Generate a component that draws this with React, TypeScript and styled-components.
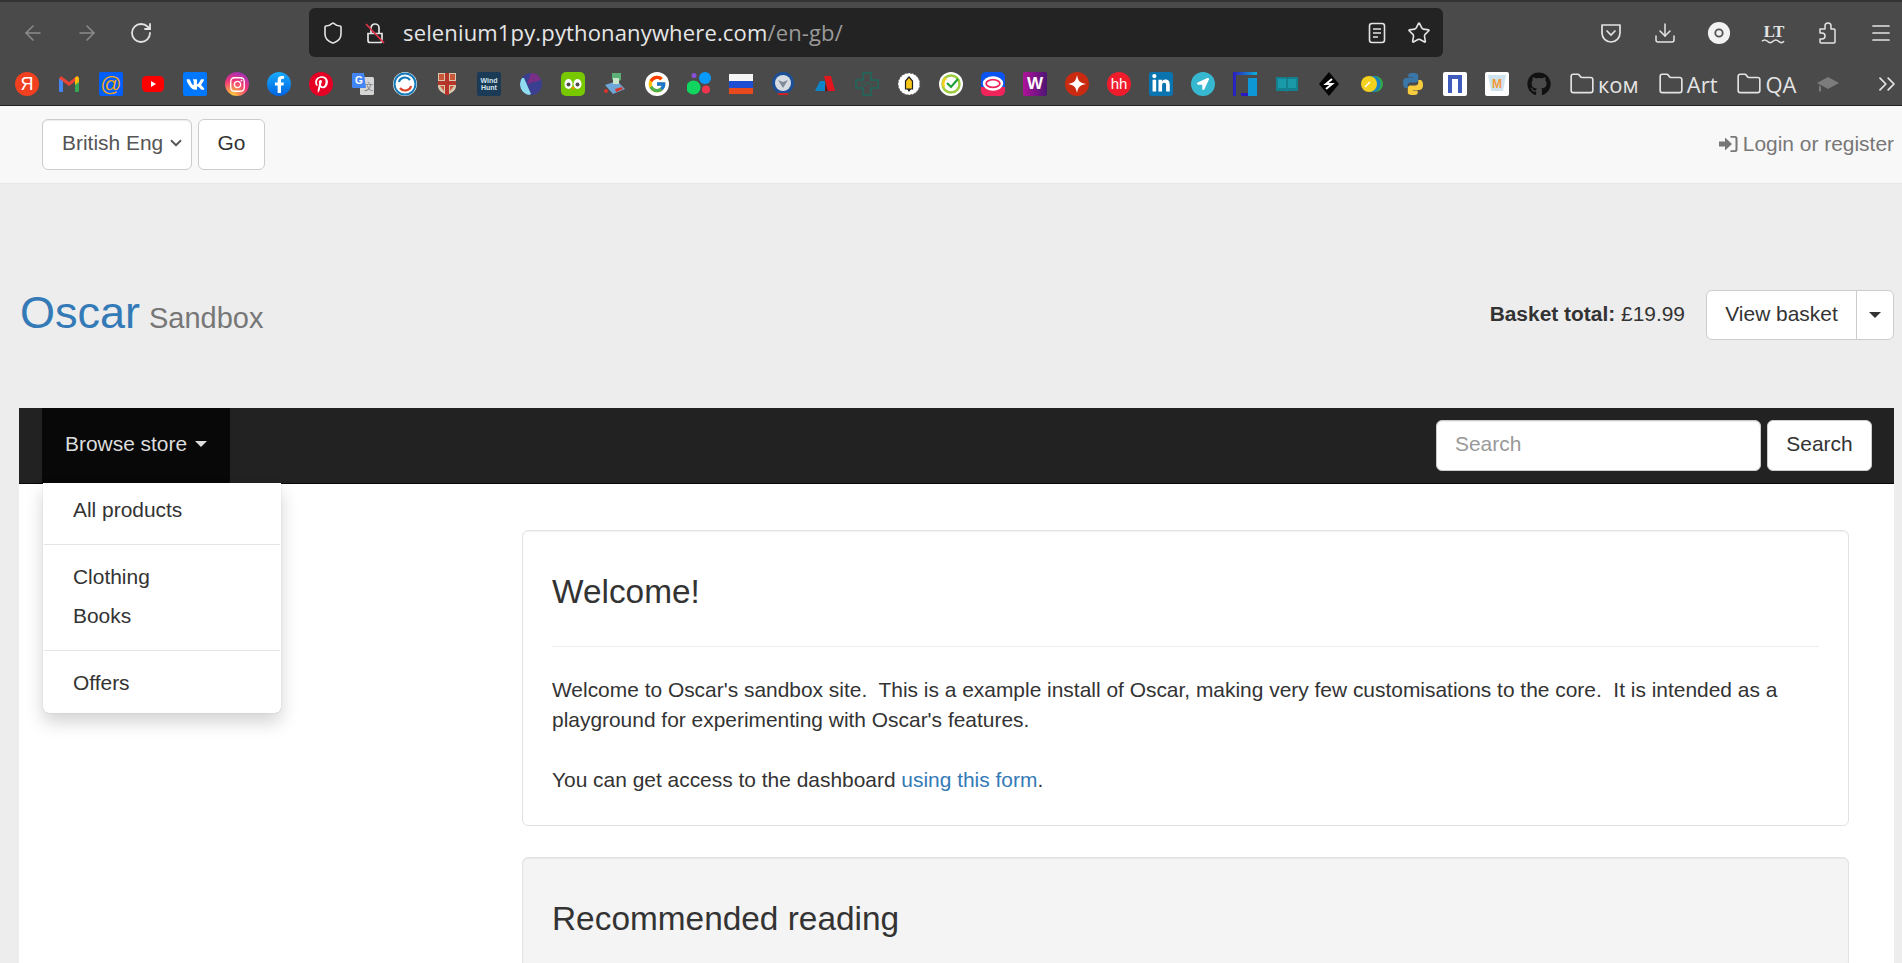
import React from "react";
import styled, { createGlobalStyle } from "styled-components";
import { ArrowLeft, ArrowRight, ChevronDown, ChevronsRight, Download, Folder, Menu, RotateCw, Shield, Star } from "lucide-react";
import { FaFacebookF, FaGithub, FaInstagram, FaLinkedinIn, FaLocationArrow, FaPinterestP, FaVk } from "react-icons/fa";
import { FcGoogle } from "react-icons/fc";

const GlobalStyle = createGlobalStyle`
    html, body {
        margin: 0;
        height: 100%;
        overflow: hidden;
        background: #ededed;
    }
    body {
        font-family: "Liberation Sans", Arial, sans-serif;
        font-size: 20.93px;
        line-height: 30px;
        color: #333;
    }
    * {
        box-sizing: border-box;
    }
`

/** Browser chrome */
const Chrome = styled.div`
    height: 106px;
    background: #4a4a4a;
    border-top: 2px solid #333;
    border-bottom: 1px solid #222;
    font-family: "Open Sans", "Noto Sans", sans-serif;
    color: #e4e4e4;
`

const Toolbar = styled.div`
    display: flex;
    align-items: center;
    height: 61px;
    padding: 0 9px 0 21px;
`

const ToolGroup = styled.div`
    display: flex;
    align-items: center;
    gap: 30px;
`

const ToolIcon = styled.span<{ $dim?: boolean }>`
    display: flex;
    align-items: center;
    justify-content: center;
    width: 24px;
    height: 24px;
    color: ${p => (p.$dim ? "#8c8c8c" : "#e4e4e4")};
`

const UrlBar = styled.div`
    display: flex;
    align-items: center;
    gap: 18px;
    width: 1134px;
    height: 49px;
    margin-left: 156px;
    margin-right: auto;
    padding: 0 12px;
    background: #232323;
    border-radius: 6px;
`

const UrlText = styled.div`
    flex: 1;
    margin-left: -2px;
    padding-bottom: 1px;
    font-size: 22px;
    letter-spacing: 0.15px;
    line-height: 28px;
    color: #e6e6e6;
`

const UrlPath = styled.span`
    color: #9a9a9a;
`

const BookmarkBar = styled.div`
    display: flex;
    align-items: center;
    gap: 18px;
    height: 42px;
    padding: 0 1px 0 15px;
`

const BookmarkSlot = styled.span`
    flex: none;
    display: flex;
    width: 24px;
    height: 24px;
`

const FolderLink = styled.span`
    display: flex;
    align-items: center;
    gap: 3px;
    margin-right: 1px;
    font-size: 22px;
    line-height: 24px;
    color: #e4e4e4;
`

const BookmarkEnd = styled.span`
    margin-left: auto;
    display: flex;
    color: #e4e4e4;
`

const FaviconBox = styled.span<{ $bg: string; $round?: boolean; $color?: string; $radius?: number }>`
    display: flex;
    align-items: center;
    justify-content: center;
    width: 24px;
    height: 24px;
    background: ${p => p.$bg};
    border-radius: ${p => (p.$round ? "50%" : `${p.$radius ?? 2}px`)};
    color: ${p => p.$color ?? "#fff"};
`

const FaviconLetter = styled.span<{ $size?: number; $weight?: number }>`
    font-family: "Liberation Sans", sans-serif;
    font-size: ${p => p.$size ?? 15}px;
    font-weight: ${p => p.$weight ?? 700};
    line-height: 24px;
`

/** Site top bar */
const TopNav = styled.div`
    display: flex;
    align-items: center;
    justify-content: space-between;
    height: 78px;
    padding: 0 8px 0 42px;
    background: #f8f8f8;
    border-bottom: 1px solid #e7e7e7;
`

const LanguageForm = styled.div`
    display: flex;
    gap: 6px;
`

const LanguageSelect = styled.div`
    display: flex;
    align-items: center;
    justify-content: space-between;
    width: 150px;
    height: 51px;
    padding: 0 6px 3px 19px;
    background: #fff;
    border: 1px solid #ccc;
    border-radius: 6px;
    box-shadow: inset 0 1px 1px rgba(0, 0, 0, 0.075);
    color: #555;
`

const Button = styled.div<{ $width: number }>`
    display: flex;
    align-items: center;
    justify-content: center;
    width: ${p => p.$width}px;
    height: 51px;
    padding-bottom: 3px;
    background: #fff;
    border: 1px solid #ccc;
    border-radius: 6px;
    color: #333;
`

const LoginLink = styled.div`
    display: flex;
    align-items: center;
    gap: 5px;
    padding-bottom: 2px;
    color: #777;
`

/** Logo and basket */
const Header = styled.div`
    display: flex;
    align-items: center;
    justify-content: space-between;
    height: 224px;
    padding: 106px 8px 68px 20px;
`

const Brand = styled.h1`
    margin: 0;
    font-size: 45px;
    font-weight: 400;
    line-height: 50px;
    color: #337ab7;
`

const BrandSmall = styled.small`
    margin-left: 9px;
    font-size: 29px;
    color: #777;
`

const Basket = styled.div`
    display: flex;
    align-items: center;
    gap: 21px;
`

const BasketTotal = styled.span`
    padding-bottom: 2px;
`

const BasketButtons = styled.div`
    display: flex;
    height: 50px;
    background: #fff;
    border: 1px solid #ccc;
    border-radius: 6px;
`

const ViewBasket = styled.div`
    display: flex;
    align-items: center;
    justify-content: center;
    width: 150px;
    padding-bottom: 2px;
    border-right: 1px solid #ccc;
`

const BasketCaret = styled.div`
    display: flex;
    align-items: center;
    justify-content: center;
    width: 36px;
`

const Caret = styled.span<{ $color: string }>`
    display: inline-block;
    border-top: 6px solid ${p => p.$color};
    border-left: 6px solid transparent;
    border-right: 6px solid transparent;
`

/** Dark navbar */
const Navbar = styled.div`
    display: flex;
    justify-content: space-between;
    height: 76px;
    margin: 0 8px 0 19px;
    padding: 0 22px 0 23px;
    background: #222;
    border-bottom: 1px solid #080808;
`

const BrowseToggle = styled.div`
    position: relative;
    display: flex;
    align-items: center;
    gap: 8px;
    padding: 0 23px 3px;
    background: #080808;
    color: #ddd;
`

const Dropdown = styled.div`
    position: absolute;
    top: 100%;
    left: 1px;
    z-index: 5;
    width: 238px;
    height: 230px;
    padding: 7px 0 10px;
    background: #fff;
    border-radius: 0 0 6px 6px;
    box-shadow: 0 9px 18px rgba(0, 0, 0, 0.175), 0 0 1px rgba(0, 0, 0, 0.3);
`

const DropdownItem = styled.div`
    padding: 4.5px 30px;
    color: #333;
`

const DropdownDivider = styled.div`
    height: 1px;
    margin: 15px 1px 12px;
    background: #e5e5e5;
`

const SearchForm = styled.div`
    display: flex;
    gap: 6px;
    padding-top: 12px;
`

const SearchInput = styled.input`
    width: 325px;
    height: 51px;
    padding: 0 18px 3px;
    background: #fff;
    border: 1px solid #ccc;
    border-radius: 6px;
    box-shadow: inset 0 1px 1px rgba(0, 0, 0, 0.075);
    font: inherit;
    &::placeholder {
        color: #999;
        opacity: 1;
    }
`

/** Page body */
const Content = styled.div`
    height: 479px;
    margin: 0 8px 0 19px;
    padding: 46px 45px 0 503px;
    background: #fff;
`

const Panel = styled.section<{ $muted?: boolean }>`
    margin-bottom: 31px;
    padding: 43px 29px 30px;
    background: ${p => (p.$muted ? "#f4f4f4" : "#fff")};
    border: 1px solid #e3e3e3;
    border-radius: 6px;
    box-shadow: inset 0 1px 1px rgba(0, 0, 0, 0.05);
`

const PanelTitle = styled.h2`
    margin: 0;
    font-size: 33.4px;
    font-weight: 400;
    line-height: 36px;
`

const Rule = styled.hr`
    margin: 36px 0 28px;
    border: 0;
    border-top: 1px solid #eee;
`

const Copy = styled.p`
    margin: 0;
`

const TextLink = styled.a`
    color: #337ab7;
`

const Reader = () => (
    <svg width="22" height="22" viewBox="0 0 22 22" fill="none" stroke="currentColor" strokeWidth="1.6">
        <rect x="3.5" y="1.5" width="15" height="19" rx="2.5" />
        <path d="M7 7h8M7 11h8M7 15h5" />
    </svg>
);

const UnsafeLock = () => (
    <svg width="24" height="24" viewBox="0 0 24 24" fill="none">
        <path d="M5 12.5h14v7a2 2 0 0 1-2 2H7a2 2 0 0 1-2-2zM8 12V7a4 4 0 0 1 8 0v5" stroke="#e4e4e4" strokeWidth="1.7" />
        <path d="M3 3l18 19" stroke="#e0314b" strokeWidth="1.8" />
    </svg>
);

const Pocket = () => (
    <svg width="24" height="24" viewBox="0 0 24 24" fill="none" stroke="currentColor" strokeWidth="1.7">
        <path d="M3 4h18v8a9 9 0 0 1-18 0V4z" strokeLinejoin="round" />
        <path d="M8 10l4 4 4-4" strokeLinecap="round" />
    </svg>
);

const Disc = () => (
    <svg width="26" height="26" viewBox="0 0 26 26">
        <circle cx="13" cy="13" r="12" fill="#f2f2f2" />
        <circle cx="13" cy="13" r="4" fill="none" stroke="#555" strokeWidth="2" />
    </svg>
);

const Translate = () => (
    <svg width="26" height="26" viewBox="0 0 26 26" fill="none" stroke="currentColor" strokeWidth="1.6">
        <text x="3" y="17" fontSize="18" fontWeight="700" fontFamily="Liberation Serif, serif" fill="currentColor" stroke="none">LT</text>
        <path d="M1 22c2-2 4-2 6 0s4 2 6 0 4-2 6 0 4 2 6 0" />
    </svg>
);

const ExtensionPuzzle = () => (
    <svg width="26" height="26" viewBox="0 0 24 24" fill="none" stroke="currentColor" strokeWidth="1.5" strokeLinejoin="round">
        <path d="M5 8h5V5a3 3 0 0 1 6 0v3h3a1 1 0 0 1 1 1v12a1 1 0 0 1-1 1H6a1 1 0 0 1-1-1v-3h2a3 3 0 0 0 0-6H5z" />
    </svg>
);

const LoginIcon = () => (
    <svg width="19" height="18" viewBox="0 0 19 18" fill="#777">
        <path d="M0 6.5h6V2.5L13 9l-7 6.500V11.500H0z" />
        <path d="M11.500 1H16a2.500 2.500 0 0 1 2.500 2.500v11A2.500 2.500 0 0 1 16 17h-4.500v-1.800H15.500a1 1 0 0 0 1-1V3.800a1 1 0 0 0-1-1h-4z" />
    </svg>
);

const Svg: React.FC<{ children: React.ReactNode }> = ({ children }) => (
    <svg width="24" height="24" viewBox="0 0 24 24">{children}</svg>
);

const pythonPath = "M11.900 1C7 1 7.300 3.100 7.300 3.100V5.400h4.800v.7H5.400S2 5.700 2 10.900s2.900 5 2.900 5h1.800v-2.400s-.1-3 2.900-3h4.800s2.800 0 2.800-2.700V3.800S17.900 1 11.900 1z";

const favicons: React.ReactNode[] = [
    <FaviconBox $bg="#f0401f" $round><FaviconLetter $size={18} $weight={400}>Я</FaviconLetter></FaviconBox>,
    <Svg>
        <path fill="#4285f4" d="M2 6h4v14H3.500A1.500 1.500 0 0 1 2 18.500z" />
        <path fill="#34a853" d="M18 6h4v12.500a1.500 1.500 0 0 1-1.500 1.500H18z" />
        <path fill="#ea4335" d="M2 6.500 4 4l8 6 8-6 2 2.500-10 7.500z" />
        <path fill="#fbbc04" d="M18 5.500 20.500 4 22 6v4l-4 3z" />
    </Svg>,
    <FaviconBox $bg="#005ff9" $color="#f2a71b"><FaviconLetter $size={21} $weight={400}>@</FaviconLetter></FaviconBox>,
    <Svg>
        <rect x="1" y="4" width="22" height="16" rx="4.500" fill="#f00" />
        <path d="M10 9v6l5-3z" fill="#fff" />
    </Svg>,
    <FaviconBox $bg="#0077ff"><FaVk size={19} /></FaviconBox>,
    <FaviconBox $bg="radial-gradient(circle at 30% 100%, #fdd835 0%, #f0337a 55%, #7a32d6 100%)" $round><FaInstagram size={17} /></FaviconBox>,
    <FaviconBox $bg="linear-gradient(#18acfe, #0163e0)" $round><FaFacebookF size={17} /></FaviconBox>,
    <FaviconBox $bg="#e60023" $round><FaPinterestP size={17} /></FaviconBox>,
    <Svg>
        <rect x="9" y="5" width="14" height="18" rx="1.500" fill="#d5d5d5" />
        <text x="13" y="18" fontSize="10" fontFamily="Liberation Sans, sans-serif" fill="#777">文</text>
        <path d="M2 1h11l2 15H2a1 1 0 0 1-1-1V2a1 1 0 0 1 1-1z" fill="#4285f4" />
        <text x="4" y="12" fontSize="10" fontWeight="700" fontFamily="Liberation Sans, sans-serif" fill="#fff">G</text>
    </Svg>,
    <Svg>
        <circle cx="12" cy="12" r="12" fill="#fff" />
        <circle cx="12" cy="12" r="10.500" fill="none" stroke="#1379b8" strokeWidth="2" />
        <path d="M6 10c1-5 8-6 11-2" fill="none" stroke="#1379b8" strokeWidth="2.200" />
        <path d="M18 14c-1 5-8 6-11 2" fill="none" stroke="#d9452c" strokeWidth="2.200" />
    </Svg>,
    <Svg>
        <path d="M3 1h18v13c0 5-5 7-9 9-4-2-9-4-9-9z" fill="#d8c8b0" />
        <path d="M10 1h4v22h-4zM3 9h18v4H3z" fill="#b5352a" />
        <path d="M4 2h5v6H4zM15 2h5v6h-5zM5 14h4v5zM15 14h4l-4 5z" fill="#c9583a" />
    </Svg>,
    <FaviconBox $bg="#1b3a55">
        <svg width="24" height="24" viewBox="0 0 24 24">
            <text x="12" y="11" textAnchor="middle" fontSize="7" fontWeight="700" fontFamily="Liberation Sans, sans-serif" fill="#d5e4ee">Wind</text>
            <text x="12" y="18" textAnchor="middle" fontSize="7" fontWeight="700" fontFamily="Liberation Sans, sans-serif" fill="#d5e4ee">Hunt</text>
        </svg>
    </FaviconBox>,
    <Svg>
        <circle cx="12" cy="12" r="11" fill="#3a3f8f" />
        <path d="M12 1a11 11 0 0 1 10 7L8 12z" fill="#7a2f86" />
        <path d="M3 6a11 11 0 0 0 7 17l2-1L5 6z" fill="#8fdcf0" />
    </Svg>,
    <FaviconBox $bg="#78c800" $radius={5}>
        <svg width="24" height="24" viewBox="0 0 24 24">
            <ellipse cx="7.500" cy="12" rx="4" ry="5" fill="#fff" />
            <ellipse cx="16.500" cy="12" rx="4" ry="5" fill="#fff" />
            <circle cx="7.500" cy="12.500" r="2" fill="#4a4a4a" />
            <circle cx="16.500" cy="12.500" r="2" fill="#4a4a4a" />
            <path d="M10 15h4l-2 3z" fill="#f49000" />
        </svg>
    </FaviconBox>,
    <Svg>
        <path d="M9 1h9v7l-6 3-3-4z" fill="#5db075" />
        <path d="M2 13l12-4 8 8-12 5z" fill="#6fa7d8" />
        <path d="M10 6h6v6h-6z" fill="#c8e6c9" />
        <circle cx="3" cy="19" r="2" fill="#d9352a" />
        <path d="M12 17l7-2 1 2-7 3z" fill="#d9352a" />
    </Svg>,
    <FaviconBox $bg="#fff" $round><FcGoogle size={20} /></FaviconBox>,
    <Svg>
        <circle cx="18" cy="6" r="6" fill="#0a9bff" />
        <circle cx="7" cy="3.500" r="2.500" fill="#8a4fd8" />
        <circle cx="6.500" cy="15.500" r="7" fill="#10d55f" />
        <circle cx="19" cy="17.500" r="4" fill="#f0364f" />
    </Svg>,
    <Svg>
        <rect x="0" y="2" width="24" height="7" fill="#f5f5f5" />
        <rect x="0" y="9" width="24" height="7" fill="#1f4fd0" />
        <rect x="0" y="16" width="24" height="6" fill="#e8491d" />
    </Svg>,
    <Svg>
        <circle cx="12" cy="11" r="11" fill="#1c4f96" />
        <circle cx="12" cy="11" r="8" fill="#d8dde4" />
        <path d="M7 8l5 8 5-8-5 2z" fill="#7f8b99" />
        <rect x="7" y="21" width="10" height="2" fill="#c22" />
    </Svg>,
    <Svg>
        <path d="M2 19l5-10h5v10z" fill="#0f85c9" />
        <path d="M11 4h7l4 15h-7z" fill="#e2161c" />
        <path d="M12 12l3 7h-3z" fill="#6a1016" />
    </Svg>,
    <Svg>
        <path d="M8 1h8v7h7v8h-7v7H8v-7H1V8h7z" fill="none" stroke="#1e6a5c" strokeWidth="1.500" />
        <path d="M5 13l3-2 2 3 3-4 2 3 3-1" fill="none" stroke="#1e6a5c" strokeWidth="0.800" />
    </Svg>,
    <Svg>
        <circle cx="12" cy="12" r="11" fill="#fff" stroke="#555" strokeWidth="1" strokeDasharray="2 1.500" />
        <path d="M8.500 9l3.500-4 3.500 4v8h-7z" fill="#f5c518" stroke="#222" strokeWidth="1.200" />
        <path d="M12 20l-2-3h4z" fill="#222" />
    </Svg>,
    <Svg>
        <circle cx="12" cy="12" r="12" fill="#fff" />
        <circle cx="12" cy="12" r="8.500" fill="none" stroke="#9ccc3c" strokeWidth="2.500" />
        <path d="M5 15a8 8 0 0 1 2-9" fill="none" stroke="#f5d020" strokeWidth="2.500" />
        <path d="M8 11l4 4 7-8" fill="none" stroke="#21a038" strokeWidth="2.200" />
    </Svg>,
    <FaviconBox $bg="linear-gradient(#0a55f0 62%, #f0245a 62%)" $radius={5}>
        <svg width="24" height="24" viewBox="0 0 24 24">
            <ellipse cx="12" cy="11.500" rx="9" ry="6" fill="#f0245a" stroke="#fff" strokeWidth="2.500" />
            <ellipse cx="12" cy="11.500" rx="6" ry="3" fill="#fff" />
        </svg>
    </FaviconBox>,
    <FaviconBox $bg="linear-gradient(90deg, #b0129a, #4c1573)"><FaviconLetter $size={17}>W</FaviconLetter></FaviconBox>,
    <FaviconBox $bg="#c92a10" $round>
        <svg width="24" height="24" viewBox="0 0 24 24">
            <path d="M12 3c1 6 3 8 9 9-6 1-8 3-9 9-1-6-3-8-9-9 6-1 8-3 9-9z" fill="#fff" />
        </svg>
    </FaviconBox>,
    <FaviconBox $bg="#f01c2c" $round><FaviconLetter $size={15} $weight={400}>hh</FaviconLetter></FaviconBox>,
    <FaviconBox $bg="#0a74b0" $radius={3}><FaLinkedinIn size={20} /></FaviconBox>,
    <FaviconBox $bg="#36b8d0" $round><FaLocationArrow size={12} /></FaviconBox>,
    <Svg>
        <defs>
            <linearGradient id="sq" x1="0" y1="0" x2="1" y2="0">
                <stop offset="0" stopColor="#2a1bc0" />
                <stop offset="1" stopColor="#0bb0d8" />
            </linearGradient>
        </defs>
        <path d="M0 0h24v3H3v21H0z" fill="url(#sq)" />
        <path d="M15 6h9v18h-9z" fill="#0d97d6" />
        <path d="M8 21h7v3H8z" fill="#2a1bc0" />
    </Svg>,
    <Svg>
        <path d="M1 5h10l1 1 1-1h10v14H13l-1 1-1-1H1z" fill="#12808f" />
        <path d="M3 7h8v9H3zM13 7h8v9h-8z" fill="#1a9aa8" />
    </Svg>,
    <Svg>
        <path d="M12 0l10 12-10 12L2 12z" fill="#050505" />
        <path d="M15 7l-6 5 6 0-6 5" fill="none" stroke="#fff" strokeWidth="2" />
    </Svg>,
    <Svg>
        <circle cx="16" cy="12" r="8" fill="#2fa84f" />
        <circle cx="13.500" cy="12" r="8" fill="#1b7fc4" />
        <circle cx="10" cy="12" r="8" fill="#f2d21f" />
        <path d="M6 15l5-5" stroke="#fff" strokeWidth="1.500" />
    </Svg>,
    <Svg>
        <path d={pythonPath} fill="#3a76a8" />
        <path d={pythonPath} fill="#f7cd3e" transform="rotate(180 12 12)" />
    </Svg>,
    <FaviconBox $bg="#fff">
        <svg width="24" height="24" viewBox="0 0 24 24">
            <path d="M5 3h14v18h-4V7h-6v14H5z" fill="#3f5cbc" />
        </svg>
    </FaviconBox>,
    <FaviconBox $bg="#fff">
        <svg width="24" height="24" viewBox="0 0 24 24">
            <path d="M3 3h18l-3 16H6z" fill="#cfe3ef" />
            <text x="12" y="16" textAnchor="middle" fontSize="12" fontWeight="700" fontFamily="Liberation Sans, sans-serif" fill="#f0993a">M</text>
        </svg>
    </FaviconBox>,
    <FaviconBox $bg="transparent" $color="#111"><FaGithub size={24} /></FaviconBox>,
];

const GraduationCap = () => (
    <svg width="24" height="24" viewBox="0 0 24 24" fill="#7c7c7c">
        <path d="M1 11l11-6 11 6-11 6z" />
        <path d="M5 15v5l-2-1v-6z" />
    </svg>
);

const App: React.FC = () => {
    return (
        <>
            <GlobalStyle />
            <Chrome>
                <Toolbar>
                    <ToolGroup>
                        <ToolIcon $dim><ArrowLeft size={24} strokeWidth={1.500} /></ToolIcon>
                        <ToolIcon $dim><ArrowRight size={24} strokeWidth={1.500} /></ToolIcon>
                        <ToolIcon><RotateCw size={24} strokeWidth={1.800} /></ToolIcon>
                    </ToolGroup>
                    <UrlBar>
                        <ToolIcon><Shield size={24} strokeWidth={1.600} /></ToolIcon>
                        <ToolIcon><UnsafeLock /></ToolIcon>
                        <UrlText>selenium1py.pythonanywhere.com<UrlPath>/en-gb/</UrlPath></UrlText>
                        <ToolIcon><Reader /></ToolIcon>
                        <ToolIcon><Star size={24} strokeWidth={1.600} /></ToolIcon>
                    </UrlBar>
                    <ToolGroup>
                        <ToolIcon><Pocket /></ToolIcon>
                        <ToolIcon><Download size={28} strokeWidth={1.500} /></ToolIcon>
                        <ToolIcon><Disc /></ToolIcon>
                        <ToolIcon><Translate /></ToolIcon>
                        <ToolIcon><ExtensionPuzzle /></ToolIcon>
                        <ToolIcon><Menu size={24} strokeWidth={1.700} /></ToolIcon>
                    </ToolGroup>
                </Toolbar>
                <BookmarkBar>
                    {favicons.map((icon, i) => (
                        <BookmarkSlot key={i}>{icon}</BookmarkSlot>
                    ))}
                    <FolderLink><Folder size={26} strokeWidth={1.500} />ком</FolderLink>
                    <FolderLink><Folder size={26} strokeWidth={1.500} />Art</FolderLink>
                    <FolderLink><Folder size={26} strokeWidth={1.500} />QA</FolderLink>
                    <BookmarkSlot><GraduationCap /></BookmarkSlot>
                    <BookmarkEnd><ChevronsRight size={28} strokeWidth={1.500} /></BookmarkEnd>
                </BookmarkBar>
            </Chrome>

            <TopNav>
                <LanguageForm>
                    <LanguageSelect>
                        British Eng
                        <ChevronDown size={18} strokeWidth={2.400} color="#555" />
                    </LanguageSelect>
                    <Button $width={67}>Go</Button>
                </LanguageForm>
                <LoginLink><LoginIcon />Login or register</LoginLink>
            </TopNav>

            <Header>
                <Brand>Oscar<BrandSmall>Sandbox</BrandSmall></Brand>
                <Basket>
                    <BasketTotal><strong>Basket total:</strong> £19.99</BasketTotal>
                    <BasketButtons>
                        <ViewBasket>View basket</ViewBasket>
                        <BasketCaret><Caret $color="#333" /></BasketCaret>
                    </BasketButtons>
                </Basket>
            </Header>

            <Navbar>
                <BrowseToggle>
                    Browse store <Caret $color="#ddd" />
                    <Dropdown>
                        <DropdownItem>All products</DropdownItem>
                        <DropdownDivider />
                        <DropdownItem>Clothing</DropdownItem>
                        <DropdownItem>Books</DropdownItem>
                        <DropdownDivider />
                        <DropdownItem>Offers</DropdownItem>
                    </Dropdown>
                </BrowseToggle>
                <SearchForm>
                    <SearchInput placeholder="Search" />
                    <Button $width={105}>Search</Button>
                </SearchForm>
            </Navbar>

            <Content>
                <Panel>
                    <PanelTitle>Welcome!</PanelTitle>
                    <Rule />
                    <Copy>
                        Welcome to Oscar's sandbox site.&nbsp; This is a example install of Oscar, making very few customisations to the core.&nbsp; It is intended as a playground for experimenting with Oscar's features.
                        <br /><br />
                        You can get access to the dashboard <TextLink>using this form</TextLink>.
                    </Copy>
                </Panel>
                <Panel $muted>
                    <PanelTitle>Recommended reading</PanelTitle>
                </Panel>
            </Content>
        </>
    );
};

export default App;
